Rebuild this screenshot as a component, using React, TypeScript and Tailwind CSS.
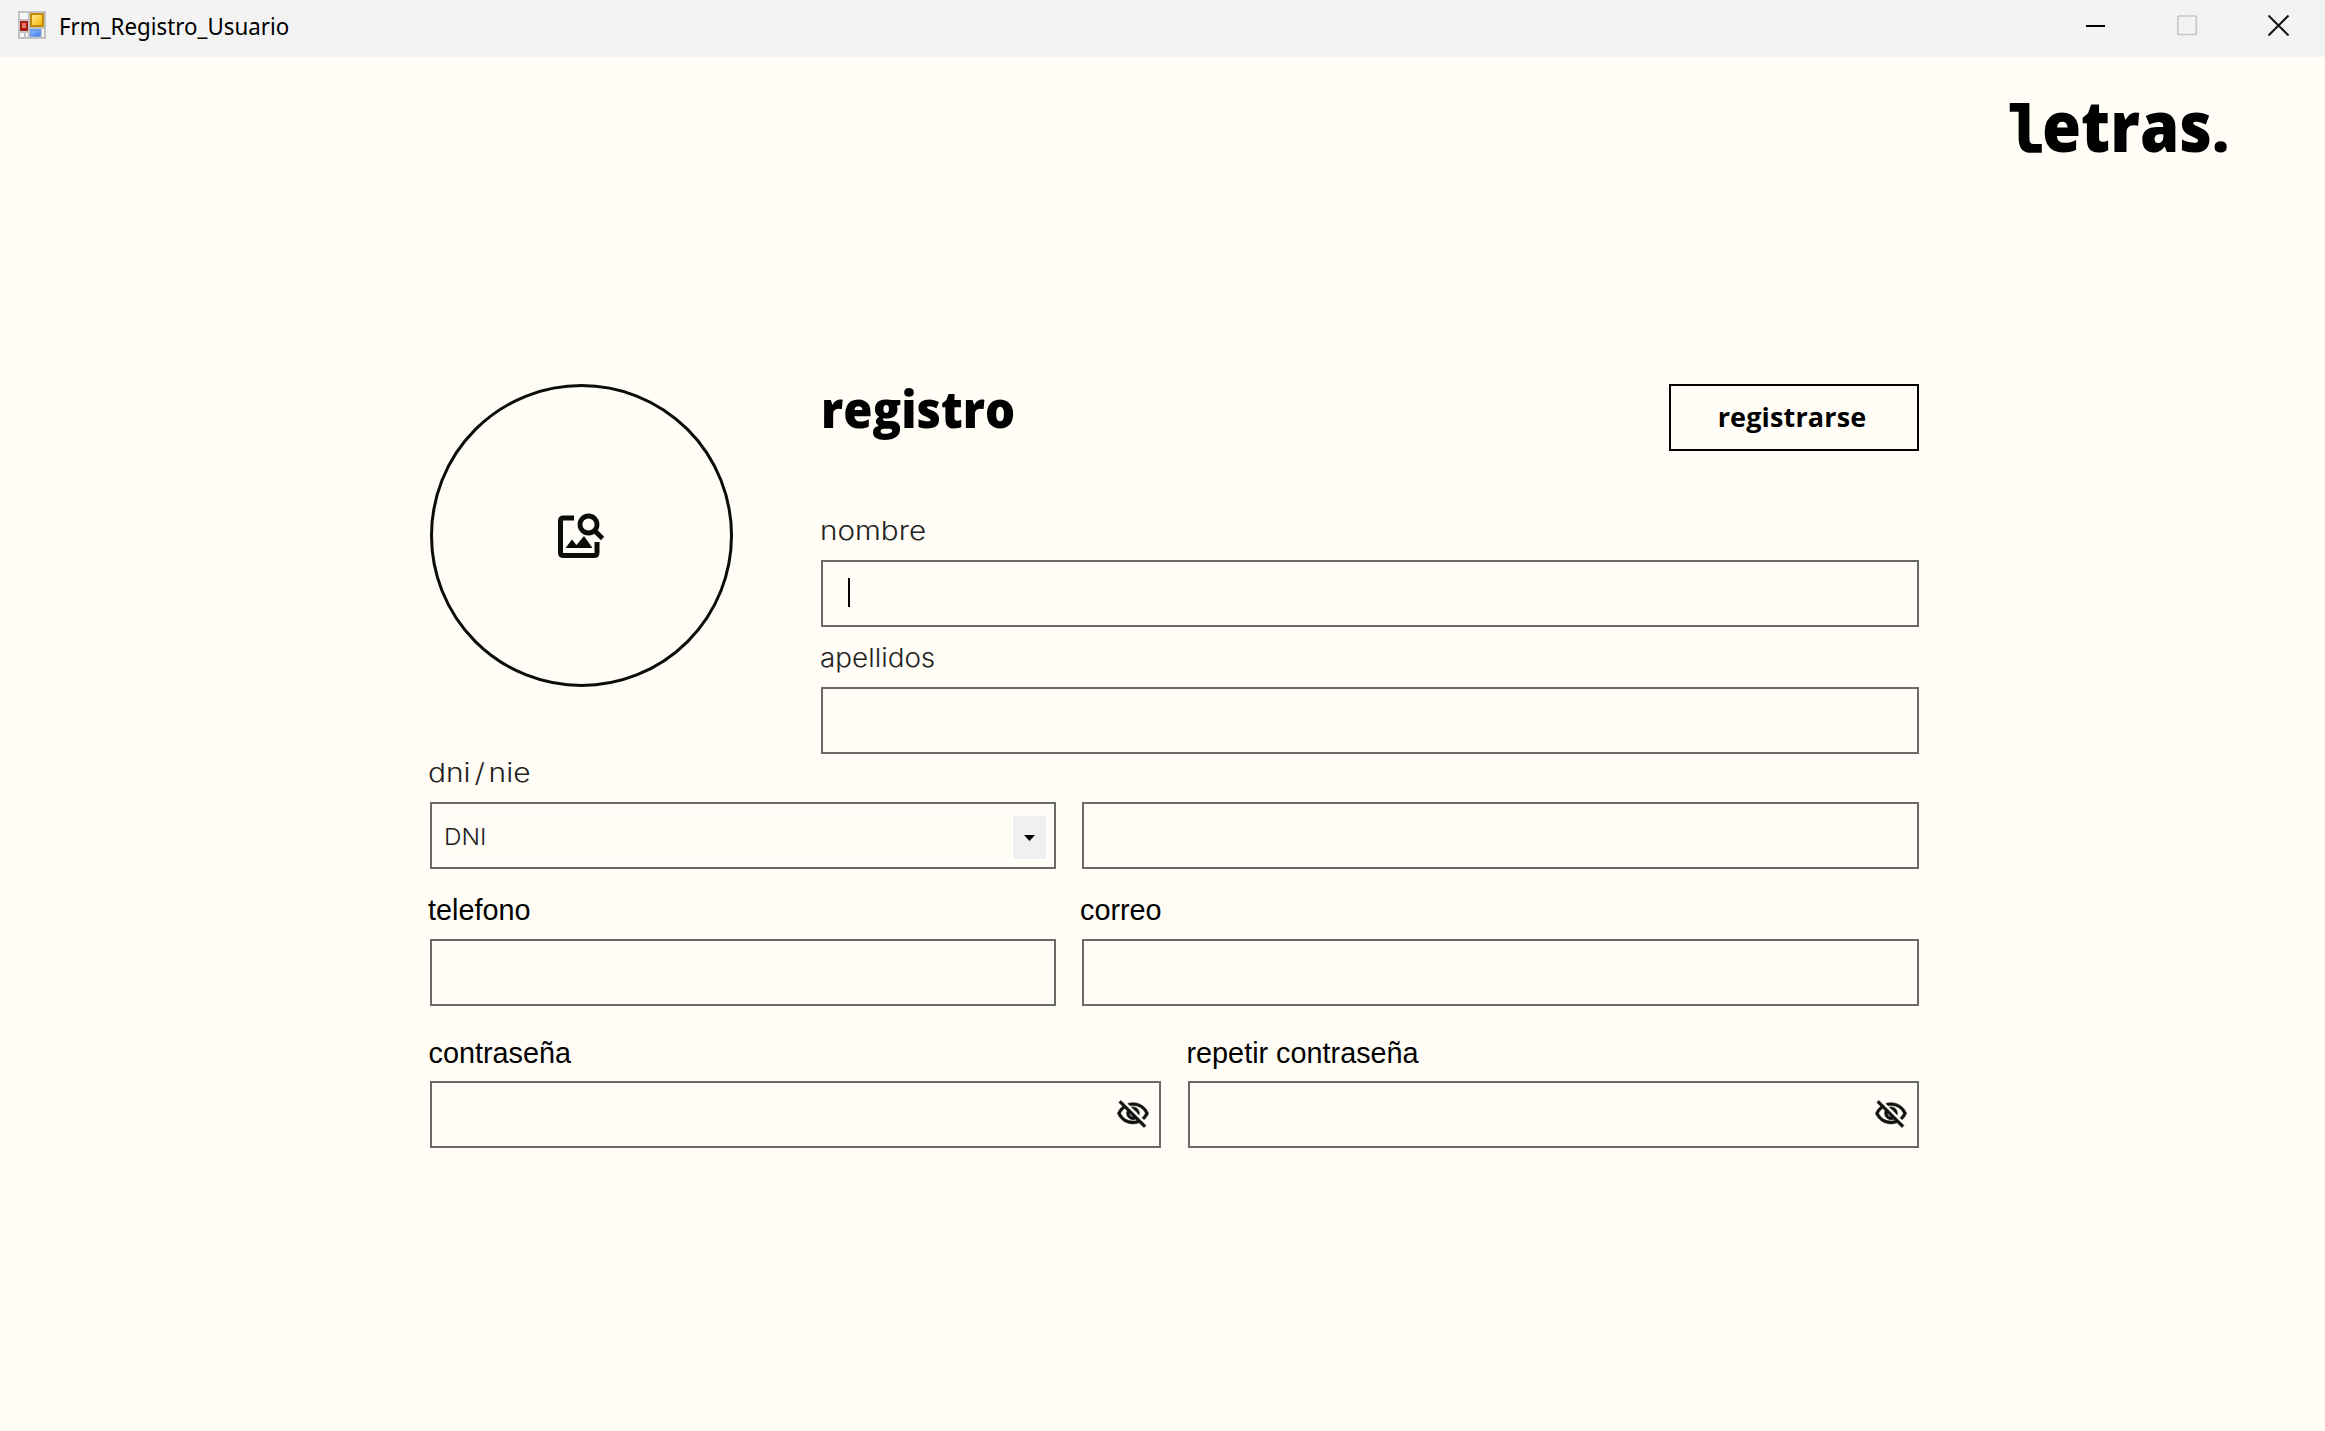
import React from "react";

function AppIcon() {
  return (
    <svg className="h-7 w-7" viewBox="0 0 28 28">
      <defs>
        <linearGradient id="gold" x1="0" y1="0" x2="1" y2="1">
          <stop offset="0" stopColor="#ffe98a" />
          <stop offset="1" stopColor="#f5b70c" />
        </linearGradient>
        <linearGradient id="blue" x1="0" y1="0" x2="1" y2="1">
          <stop offset="0" stopColor="#8bb8ff" />
          <stop offset="1" stopColor="#3f78e0" />
        </linearGradient>
      </defs>
      <rect width="28" height="28" fill="#c2c2c2" />
      <rect x="2" y="2" width="8" height="6" fill="#f6f6f6" />
      <rect x="2" y="22" width="4" height="4" fill="#f6f6f6" />
      <rect x="8" y="22" width="2" height="4" fill="#f6f6f6" />
      <rect x="24" y="18" width="2" height="8" fill="#f6f6f6" />
      <rect x="2" y="10" width="8" height="10" fill="#a81c14" />
      <rect x="4" y="12" width="4" height="5" fill="#e8776c" />
      <rect x="12" y="2" width="14" height="14" fill="#c28a08" />
      <rect x="14" y="4" width="10" height="10" fill="url(#gold)" />
      <rect x="12" y="18" width="11" height="8" fill="#6d9cf0" />
      <rect x="13.500" y="20" width="8" height="5" fill="url(#blue)" />
    </svg>
  );
}

function ImageSearchIcon() {
  return (
    <svg className="mr-[1px] h-[46px] w-[48px]" viewBox="0 0 48 46" fill="none" stroke="#0b0d0a">
      <path d="M17 5H6.500Q3.500 5 3.500 8V39.500Q3.500 42.500 6.500 42.500H37Q40 42.500 40 39.500V29" strokeWidth="5" />
      <circle cx="31.500" cy="11.500" r="8.500" strokeWidth="4.800" />
      <path d="M37.500 17.500L45.500 25.500" strokeWidth="4.800" />
      <path d="M8.500 35L15 26.500L19.500 32L27 23L35.500 35Z" fill="#0b0d0a" stroke="none" />
    </svg>
  );
}

function EyeOffIcon() {
  return (
    <svg className="mb-[2px] h-[34px] w-[34px]" viewBox="0 0 24 24" fill="#111" stroke="#111" strokeWidth="0.400">
      <path d="M12 6a9.770 9.770 0 0 1 8.820 5.500 9.647 9.647 0 0 1-2.410 3.120l1.410 1.410c1.390-1.230 2.490-2.770 3.180-4.530C21.270 7.110 17 4 12 4c-1.270 0-2.490.2-3.640.57l1.650 1.650C10.660 6.090 11.320 6 12 6zm-1.070 1.140L13 9.210c.57.25 1.030.71 1.280 1.280l2.070 2.070c.08-.34.14-.7.14-1.070C16.500 9.010 14.480 7 12 7c-.37 0-.72.05-1.070.14zM2.010 3.870l2.680 2.680A11.738 11.738 0 0 0 1 11.500C2.730 15.890 7 19 12 19c1.520 0 2.980-.29 4.320-.82l3.420 3.420 1.410-1.410L3.420 2.450 2.010 3.870zm7.500 7.500 2.610 2.610c-.04.01-.08.02-.12.02a2.500 2.500 0 0 1-2.500-2.500c0-.05.01-.08.01-.13zm-3.400-3.400 1.750 1.750a4.600 4.600 0 0 0-.36 1.780 4.507 4.507 0 0 0 6.270 4.140l.98.98c-.88.24-1.800.38-2.750.38a9.770 9.770 0 0 1-8.820-5.500c.7-1.430 1.720-2.610 2.930-3.530z" />
    </svg>
  );
}

function TitleBar() {
  return (
    <header className="flex h-[57px] items-start justify-between bg-[#f3f3f3]">
      <div className="flex pl-[18px] pt-[11px]">
        <AppIcon />
        <span className="ml-[13px] origin-left scale-x-[0.93] whitespace-nowrap font-['Noto_Sans'] text-[24px] leading-[30px] text-black">
          Frm_Registro_Usuario
        </span>
      </div>
      <div className="flex gap-[70px] pr-9 pt-[15px]">
        <svg className="h-[21px] w-[21px]" viewBox="0 0 21 21">
          <path d="M0 11H19" stroke="#000" strokeWidth="2" />
        </svg>
        <svg className="h-[21px] w-[21px]" viewBox="0 0 21 21">
          <rect x="0.800" y="1" width="18.500" height="18.500" rx="1" fill="none" stroke="#c6c6c6" strokeWidth="1.700" />
        </svg>
        <svg className="h-[21px] w-[21px]" viewBox="0 0 21 21">
          <path d="M0.500 0.500L20.500 20.500M20.500 0.500L0.500 20.500" stroke="#111" strokeWidth="2" />
        </svg>
      </div>
    </header>
  );
}

function Logo() {
  return (
    <svg className="h-[110px] w-[234px] overflow-visible" viewBox="-6 -30 234 110" fill="#000">
      <text x="-2" y="50" fontFamily="DejaVu Sans Mono" fontWeight="700" fontSize="63" textLength="37" lengthAdjust="spacingAndGlyphs" stroke="#000" strokeWidth="2">l</text>
      <text x="32" y="51" fontFamily="Open Sans" fontWeight="800" fontSize="71" textLength="170" lengthAdjust="spacingAndGlyphs">etras</text>
      <text x="202" y="51" fontFamily="Open Sans" fontWeight="800" fontSize="60">.</text>
    </svg>
  );
}

function Box({ className = "", children }: { className?: string; children?: React.ReactNode }) {
  return <div className={`flex h-[67px] items-center border-2 border-[#696967] ${className}`}>{children}</div>;
}

const light = "origin-left font-['Inter'] font-light text-[26px] text-[#222]";
const plain = "font-['Liberation_Sans'] text-[28.800px] text-black";

export default function App() {
  return (
    <div className="h-[1431px] w-[2325px] overflow-hidden bg-[#fffdf5]">
      <TitleBar />
      <main className="flex flex-col">
        <div className="flex h-[327px] justify-end pr-[87px] pt-[14px]">
          <Logo />
        </div>
        <form className="ml-[430px] w-[1489px]">
          <div className="flex h-[370px] gap-[88px]">
            <div className="flex h-[303px] w-[303px] items-center justify-center rounded-full border-[3.500px] border-[#0b0d0a]">
              <ImageSearchIcon />
            </div>
            <div className="w-[1098px]">
              <div className="flex h-[127px] justify-between">
                <h1 className="h-12 origin-left scale-x-[0.910] whitespace-nowrap font-['Open_Sans'] text-[52px] font-extrabold leading-[48px] text-black">
                  registro
                </h1>
                <button type="button" className="flex h-[67px] w-[250px] items-center justify-center border-2 border-black pb-px pr-1 font-['Open_Sans'] text-[27px] font-bold tracking-[0.150px] text-black">
                  registrarse
                </button>
              </div>
              <label className={`-ml-[1px] block h-10 w-fit scale-x-[1.140] leading-10 ${light}`}>nombre</label>
              <Box className="mt-[9px]">
                <span className="ml-[25px] mb-[2px] h-[29px] w-[2px] bg-black" />
              </Box>
              <label className={`-ml-[1px] mt-[11px] block h-10 w-fit scale-x-[1.070] leading-10 ${light}`}>apellidos</label>
              <Box className="mt-[9px]" />
            </div>
          </div>

          <label className={`-ml-[2px] block h-[37px] w-fit scale-x-[1.150] leading-[37px] [word-spacing:-4px] ${light}`}>dni / nie</label>
          <div className="mt-[11px] flex justify-between">
            <Box className="w-[626px] justify-center">
              <div className="mt-1 flex h-[47px] w-[609px] items-center justify-between border-2 border-white pl-[3px]">
                <span className="origin-left scale-x-[1.060] font-['Inter'] text-[23px] font-light text-[#222]">DNI</span>
                <span className="flex h-[43px] w-[35px] items-center justify-center border-l-2 border-white bg-[#f0f0f0]">
                  <svg className="h-[6px] w-[11px]" viewBox="0 0 11 6">
                    <path d="M0 0H11L5.500 6Z" fill="#000" />
                  </svg>
                </span>
              </div>
            </Box>
            <Box className="w-[837px]" />
          </div>

          <div className="mt-[21px] flex justify-between">
            <div className="w-[626px]">
              <label className={`-ml-[2px] block h-10 leading-10 ${plain}`}>telefono</label>
              <Box className="mt-[9px]" />
            </div>
            <div className="w-[837px]">
              <label className={`-ml-[2px] block h-10 leading-10 ${plain}`}>correo</label>
              <Box className="mt-[9px]" />
            </div>
          </div>

          <div className="mt-[27px] flex justify-between">
            {["contraseña", "repetir contraseña"].map((t) => (
              <div key={t} className="w-[731px]">
                <label className={`-ml-[1.500px] block h-10 leading-10 ${plain}`}>{t}</label>
                <Box className="mt-[8px] justify-end pr-[9px]">
                  <EyeOffIcon />
                </Box>
              </div>
            ))}
          </div>
        </form>
      </main>
    </div>
  );
}
